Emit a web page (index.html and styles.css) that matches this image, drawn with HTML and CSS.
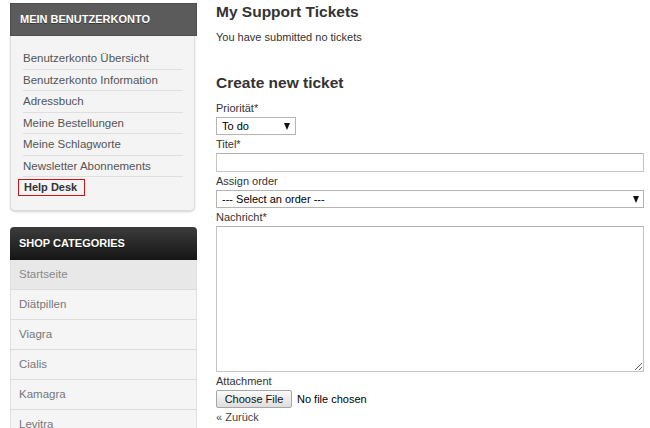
FILE: index.html
```html
<!DOCTYPE html>
<html lang="de">
<head>
<meta charset="utf-8">
<title>Help Desk</title>
<link rel="stylesheet" href="styles.css">
</head>
<body>
<div class="page">
  <aside class="sidebar">
    <section class="account">
      <h3 class="account-head">MEIN BENUTZERKONTO</h3>
      <ul class="account-list">
        <li><a href="#">Benutzerkonto Übersicht</a></li>
        <li><a href="#">Benutzerkonto Information</a></li>
        <li><a href="#">Adressbuch</a></li>
        <li><a href="#">Meine Bestellungen</a></li>
        <li><a href="#">Meine Schlagworte</a></li>
        <li><a href="#">Newsletter Abonnements</a></li>
        <li class="current"><strong class="current-box">Help Desk</strong></li>
      </ul>
    </section>
    <section class="cats">
      <h3 class="cats-head">SHOP CATEGORIES</h3>
      <ul class="cats-list">
        <li class="active"><a href="#">Startseite</a></li>
        <li><a href="#">Diätpillen</a></li>
        <li><a href="#">Viagra</a></li>
        <li><a href="#">Cialis</a></li>
        <li><a href="#">Kamagra</a></li>
        <li><a href="#">Levitra</a></li>
      </ul>
    </section>
  </aside>
  <main class="main">
    <h2 class="title">My Support Tickets</h2>
    <p class="note">You have submitted no tickets</p>
    <h2 class="title title-new">Create new ticket</h2>
    <form class="form">
      <label class="lbl">Priorität*</label>
      <span class="sel sel-small"><select><option>To do</option></select></span>
      <label class="lbl">Titel*</label>
      <input class="txt" type="text">
      <label class="lbl">Assign order</label>
      <span class="sel sel-wide"><select><option>--- Select an order ---</option></select></span>
      <label class="lbl">Nachricht*</label>
      <textarea class="area"></textarea>
      <label class="lbl">Attachment</label>
      <input class="file" type="file">
      <a class="back" href="#">« Zurück</a>
    </form>
  </main>
</div>
</body>
</html>
```

FILE: styles.css
```css
* { box-sizing: border-box; }
html, body { margin: 0; padding: 0; background: #fff; }
body {
  font-family: "Liberation Sans", Arial, sans-serif;
  font-size: 11px;
  color: #333;
  width: 650px;
  height: 428px;
  overflow: hidden;
}
a { text-decoration: none; color: inherit; }
ul { list-style: none; margin: 0; padding: 0; }
h2, h3, p { margin: 0; }

.page {
  display: flex;
  align-items: flex-start;
  padding-left: 10px;
}

.sidebar {
  width: 187px;
  flex: none;
  padding-top: 3px;
}

.account-head, .cats-head {
  height: 33px;
  line-height: 33px;
  padding-left: 9px;
  color: #fff;
  font-size: 11px;
  font-weight: bold;
  text-shadow: 0 1px 0 rgba(0,0,0,0.4);
}
.account-head {
  background: #5b5b5b;
  border: 1px solid #4e4e4e;
  line-height: 31px;
}
.account-list {
  width: 185px;
  background: #f4f4f4;
  border: 1px solid #ddd;
  border-top: none;
  border-radius: 0 0 5px 5px;
  box-shadow: 0 1px 2px rgba(0,0,0,0.18);
  padding: 12px 11px 12px 12px;
  font-size: 11.5px;
}
.account-list li {
  line-height: 20.5px;
  border-bottom: 1px solid #dedede;
  color: #555;
}
.account-list li.current { border-bottom: none; }
.current-box {
  display: inline-block;
  margin-left: -5px;
  padding: 0 7px 0 5px;
  line-height: 15px;
  font-size: 11px;
  border: 1px solid #c8141c;
  color: #333;
}

.cats { margin-top: 16px; }
.cats-head {
  background: linear-gradient(#3c3c3c, #151515);
  border-radius: 4px 4px 0 0;
}
.cats-list li {
  height: 30px;
  line-height: 29px;
  padding-left: 8px;
  background: #f5f5f5;
  border-left: 1px solid #e0e0e0;
  border-right: 1px solid #e0e0e0;
  border-bottom: 1px solid #dcdcdc;
  color: #777;
  font-size: 11.5px;
}
.cats-list li.active { background: #e8e8e8; color: #888; }

.main {
  margin-left: 19px;
  width: 428px;
  flex: none;
}
.title {
  font-size: 15.5px;
  font-weight: bold;
  line-height: 24px;
  color: #333;
}
.note { line-height: 18px; margin-top: 4px; }
.title-new { margin-top: 25px; }
.form { display: flex; flex-direction: column; align-items: flex-start; margin-top: 4px; }
.lbl { line-height: 18px; height: 18px; display: block; }

.sel { position: relative; display: block; height: 18px; }
.sel select {
  appearance: none;
  -webkit-appearance: none;
  width: 100%;
  height: 18px;
  margin: 0;
  padding: 0 0 0 5px;
  border: 1px solid #b4b4b4;
  border-radius: 0;
  background: #fff;
  font-family: "Liberation Sans", Arial, sans-serif;
  font-size: 11px;
  color: #000;
  outline: none;
}
.sel::after {
  content: "";
  position: absolute;
  right: 5px;
  top: 6px;
  border-left: 3.5px solid transparent;
  border-right: 3.5px solid transparent;
  border-top: 7px solid #111;
  pointer-events: none;
}
.sel-small { width: 80px; }
.sel-small::after { right: 6px; }
.sel-wide { width: 428px; }

.txt {
  display: block;
  width: 428px;
  height: 19px;
  margin: 0;
  border: 1px solid #c4c4c4;
  border-top-color: #b0b0b0;
  padding: 0 3px;
  font-family: inherit;
  font-size: 11px;
}
.area {
  display: block;
  width: 428px;
  height: 146px;
  margin: 0;
  border: 1px solid #c4c4c4;
  border-top-color: #b0b0b0;
  padding: 2px;
  font-family: inherit;
  font-size: 11px;
}
.file {
  height: 18px;
  font-family: "Liberation Sans", Arial, sans-serif;
  font-size: 11px;
  color: #000;
  margin: 0;
}
.file::file-selector-button {
  height: 18px;
  width: 76px;
  margin: 0 5px 0 0;
  padding: 0;
  font-family: "Liberation Sans", Arial, sans-serif;
  font-size: 11px;
  color: #111;
  background: linear-gradient(#fafafa, #dedede);
  border: 1px solid #a6a6a6;
  border-radius: 2px;
}
.back { line-height: 18px; display: block; color: #444; }
```
